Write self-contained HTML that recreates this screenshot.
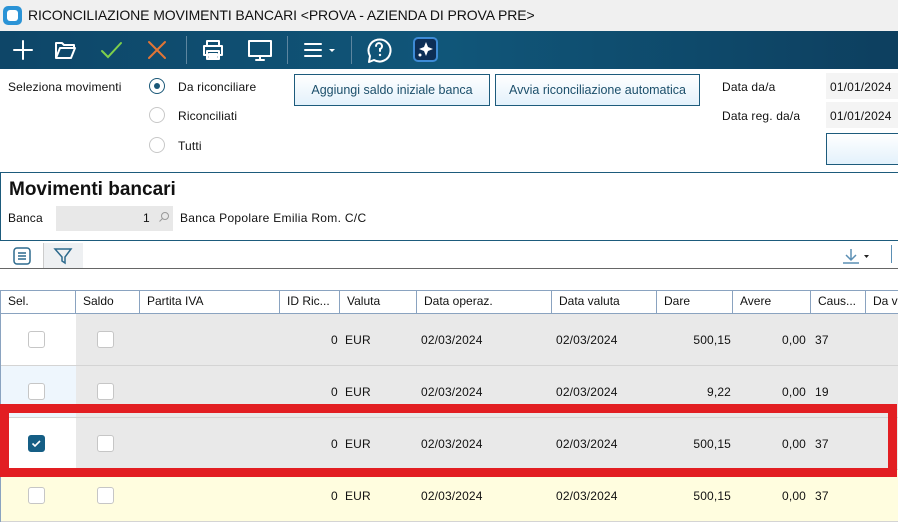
<!DOCTYPE html>
<html><head><meta charset="utf-8"><style>
*{box-sizing:border-box;margin:0;padding:0}
body{width:898px;height:522px;overflow:hidden;background:#fff;font-family:"Liberation Sans",sans-serif;font-size:12px;color:#111;position:relative}
.a{position:absolute}
.title{left:0;top:0;width:898px;height:31px;background:#f0f0f0}
.tb{left:0;top:31px;width:898px;height:38px;background:linear-gradient(90deg,#0e4668,#105679 50%,#0d3f5f)}
.sep{position:absolute;top:5px;width:1px;height:28px;background:#5d86a0}
.radio{position:absolute;width:16px;height:16px;border-radius:50%;border:1.5px solid #c8c8c8;background:#fff}
.btn{position:absolute;border:1px solid #1d5b7c;background:linear-gradient(#fff,#e3f1fb);color:#1c4f6b;font-size:12.5px;text-align:center;line-height:30px;height:32px}
.hd{position:absolute;top:290px;height:24px;background:#fff;border-top:1px solid #8aa3c0;border-bottom:1px solid #8aa3c0;border-right:1px solid #8aa3c0;padding-left:7px;line-height:21px;font-size:12px}
.row{position:absolute;left:0;width:898px;height:52px;border-bottom:1px solid #d4d4d4}
.cb{position:absolute;width:17px;height:17px;border:1.5px solid #c6c6c6;border-radius:3px;background:#fff}
.t{position:absolute;font-size:12px;line-height:14px;letter-spacing:0.15px}
</style></head><body>
<div class="a title"></div>
<div class="a" style="left:3px;top:6px;width:19px;height:19px;background:#2a93d6;border-radius:5px"><div style="position:absolute;left:4px;top:4px;width:11px;height:11px;background:#fff;border-radius:3px"></div></div>
<div class="a" style="left:28px;top:7px;font-size:14px;color:#111;letter-spacing:-0.1px">RICONCILIAZIONE MOVIMENTI BANCARI &lt;PROVA - AZIENDA DI PROVA PRE&gt;</div>
<div class="a tb">
<svg width="460" height="38" style="position:absolute;left:0;top:0" fill="none" stroke-linecap="round">
<path d="M23 10v18M14 19h18" stroke="#fff" stroke-width="2"/>
<path d="M56 12h6l2 2h10v3M56 12v15h15l4-10H60l-4 10" stroke="#fff" stroke-width="2" stroke-linejoin="round"/>
<path d="M102 20l6 6 13-14" stroke="#7ed04b" stroke-width="2"/>
<path d="M149 11l16 16M165 11l-16 16" stroke="#e27535" stroke-width="2"/>
<path d="M207 15v-5h12v5M204 15h18v9h-18zM207 20h12v8h-12zM209 23h8M209 26h8" stroke="#fff" stroke-width="2" stroke-linejoin="round"/>
<path d="M249 10h22v15h-22zM256 29h8M260 25v4" stroke="#fff" stroke-width="2" stroke-linejoin="round"/>
<path d="M305 13h16M305 19h16M305 25h16" stroke="#fff" stroke-width="2"/>
<path d="M329 18h6l-3 3z" fill="#fff"/>
<path d="M370 25a11 11 0 1 1 4 4l-5 2z" stroke="#fff" stroke-width="2" stroke-linejoin="round"/>
<path d="M376 15a3 3 0 1 1 4 3v2" stroke="#fff" stroke-width="2"/><circle cx="380" cy="24" r="1.2" fill="#fff"/>
<rect x="414" y="7" width="23" height="23" rx="4" fill="#0d2e55" stroke="#3d8bd6" stroke-width="2"/>
<path d="M426 11l2 5 5 2-5 2-2 5-2-5-5-2 5-2z" fill="#fff"/><circle cx="420" cy="24" r="1.5" fill="#fff"/>
</svg>
<div class="sep" style="left:186px"></div><div class="sep" style="left:287px"></div><div class="sep" style="left:351px"></div>
</div>
<div class="t" style="left:8px;top:80px">Seleziona movimenti</div>
<div class="radio" style="left:149px;top:78px;border-color:#1b5878"><div style="position:absolute;left:3.5px;top:3.5px;width:6px;height:6px;border-radius:50%;background:#1b5878"></div></div>
<div class="t" style="left:178px;top:80px">Da riconciliare</div>
<div class="radio" style="left:149px;top:107px"></div><div class="t" style="left:178px;top:109px">Riconciliati</div>
<div class="radio" style="left:149px;top:137px"></div><div class="t" style="left:178px;top:139px">Tutti</div>
<div class="btn" style="left:294px;top:74px;width:196px">Aggiungi saldo iniziale banca</div>
<div class="btn" style="left:495px;top:74px;width:205px">Avvia riconciliazione automatica</div>
<div class="t" style="left:722px;top:80px">Data da/a</div>
<div class="t" style="left:722px;top:109px">Data reg. da/a</div>
<div class="a" style="left:826px;top:73px;width:72px;height:26px;background:#f4f4f4"></div>
<div class="a" style="left:826px;top:102px;width:72px;height:26px;background:#f4f4f4"></div>
<div class="t" style="left:830px;top:80px">01/01/2024</div>
<div class="t" style="left:830px;top:109px">01/01/2024</div>
<div class="a" style="left:826px;top:133px;width:80px;height:32px;border:1px solid #1d5b7c;background:linear-gradient(#fff,#e3f1fb)"></div>
<div class="a" style="left:0;top:172px;width:900px;height:69px;border:1px solid #1d5b7c"></div>
<div class="a" style="left:9px;top:179px;font-size:19px;font-weight:bold">Movimenti bancari</div>
<div class="t" style="left:8px;top:211px">Banca</div>
<div class="a" style="left:56px;top:206px;width:117px;height:25px;background:#e8e8e8"></div>
<div class="t" style="left:143px;top:211px">1</div>
<svg class="a" style="left:158px;top:211px" width="12" height="12"><circle cx="7" cy="5" r="3.5" fill="none" stroke="#999"/><path d="M4.5 7.5L1.5 10.5" stroke="#999"/></svg>
<div class="t" style="left:180px;top:211px;letter-spacing:0.3px">Banca Popolare Emilia Rom. C/C</div>
<div class="a" style="left:43px;top:243px;width:40px;height:25px;background:#eef0f2;border-left:1px solid #ccc"></div>
<svg class="a" style="left:12px;top:246px" width="20" height="20" fill="none" stroke="#2d6a8d" stroke-width="1.5"><rect x="2" y="2" width="16" height="16" rx="3"/><path d="M6 7h8M6 10h8M6 13h8"/></svg>
<svg class="a" style="left:53px;top:246px" width="20" height="20" fill="none" stroke="#2d6a8d" stroke-width="1.5"><path d="M2 3h16l-6 8v6l-3-2v-4z"/></svg>
<svg class="a" style="left:840px;top:246px" width="30" height="20" fill="none" stroke="#5b8fb4" stroke-width="1.5"><path d="M11 3v11M6 9l5 5 5-5M3 17h16"/><path d="M24 9h5l-2.5 3z" fill="#222" stroke="none"/></svg>
<div class="a" style="left:891px;top:245px;width:7px;height:18px;border-left:1.5px solid #5b8fb4"></div>
<div class="a" style="left:0;top:268px;width:898px;height:1px;background:#666"></div>
<div class="hd" style="left:0;width:76px;border-left:1px solid #8aa3c0">Sel.</div>
<div class="hd" style="left:76px;width:64px">Saldo</div>
<div class="hd" style="left:140px;width:140px">Partita IVA</div>
<div class="hd" style="left:280px;width:60px">ID Ric...</div>
<div class="hd" style="left:340px;width:77px">Valuta</div>
<div class="hd" style="left:417px;width:135px">Data operaz.</div>
<div class="hd" style="left:552px;width:105px">Data valuta</div>
<div class="hd" style="left:657px;width:76px">Dare</div>
<div class="hd" style="left:733px;width:78px">Avere</div>
<div class="hd" style="left:811px;width:55px">Caus...</div>
<div class="hd" style="left:866px;width:40px">Da v</div>

<div class="row" style="top:314px;background:#e9e9e9"><div class="a" style="left:0;top:0;width:76px;height:51px;background:#fff"></div></div>
<div class="row" style="top:366px;background:#e9e9e9"><div class="a" style="left:0;top:0;width:76px;height:51px;background:#eef6fd"></div></div>
<div class="row" style="top:418px;background:#e9e9e9"><div class="a" style="left:0;top:0;width:76px;height:51px;background:#fff"></div></div>
<div class="row" style="top:470px;background:#fffddf"></div>
<div class="a" style="left:0;top:314px;width:1px;height:208px;background:#8aa3c0"></div>

<div class="cb" style="left:28px;top:331px"></div><div class="cb" style="left:97px;top:331px"></div>
<div class="cb" style="left:28px;top:383px"></div><div class="cb" style="left:97px;top:383px"></div>
<div class="cb" style="left:28px;top:435px;background:#155e85;border-color:#155e85"><svg width="14" height="14" style="position:absolute;left:0;top:0"><path d="M3.5 7.5l2.5 2.5 5-5" stroke="#fff" stroke-width="1.6" fill="none"/></svg></div><div class="cb" style="left:97px;top:435px"></div>
<div class="cb" style="left:28px;top:487px"></div><div class="cb" style="left:97px;top:487px"></div>

<div class="t" style="left:331px;top:333px">0</div><div class="t" style="left:345px;top:333px">EUR</div><div class="t" style="left:421px;top:333px">02/03/2024</div><div class="t" style="left:556px;top:333px">02/03/2024</div><div class="t" style="left:657px;top:333px;width:74px;text-align:right">500,15</div><div class="t" style="left:733px;top:333px;width:73px;text-align:right">0,00</div><div class="t" style="left:815px;top:333px">37</div>
<div class="t" style="left:331px;top:385px">0</div><div class="t" style="left:345px;top:385px">EUR</div><div class="t" style="left:421px;top:385px">02/03/2024</div><div class="t" style="left:556px;top:385px">02/03/2024</div><div class="t" style="left:657px;top:385px;width:74px;text-align:right">9,22</div><div class="t" style="left:733px;top:385px;width:73px;text-align:right">0,00</div><div class="t" style="left:815px;top:385px">19</div>
<div class="t" style="left:331px;top:437px">0</div><div class="t" style="left:345px;top:437px">EUR</div><div class="t" style="left:421px;top:437px">02/03/2024</div><div class="t" style="left:556px;top:437px">02/03/2024</div><div class="t" style="left:657px;top:437px;width:74px;text-align:right">500,15</div><div class="t" style="left:733px;top:437px;width:73px;text-align:right">0,00</div><div class="t" style="left:815px;top:437px">37</div>
<div class="t" style="left:331px;top:489px">0</div><div class="t" style="left:345px;top:489px">EUR</div><div class="t" style="left:421px;top:489px">02/03/2024</div><div class="t" style="left:556px;top:489px">02/03/2024</div><div class="t" style="left:657px;top:489px;width:74px;text-align:right">500,15</div><div class="t" style="left:733px;top:489px;width:73px;text-align:right">0,00</div><div class="t" style="left:815px;top:489px">37</div>

<div class="a" style="left:0;top:404px;width:897px;height:73px;border:9px solid #e21e22"></div>
</body></html>
